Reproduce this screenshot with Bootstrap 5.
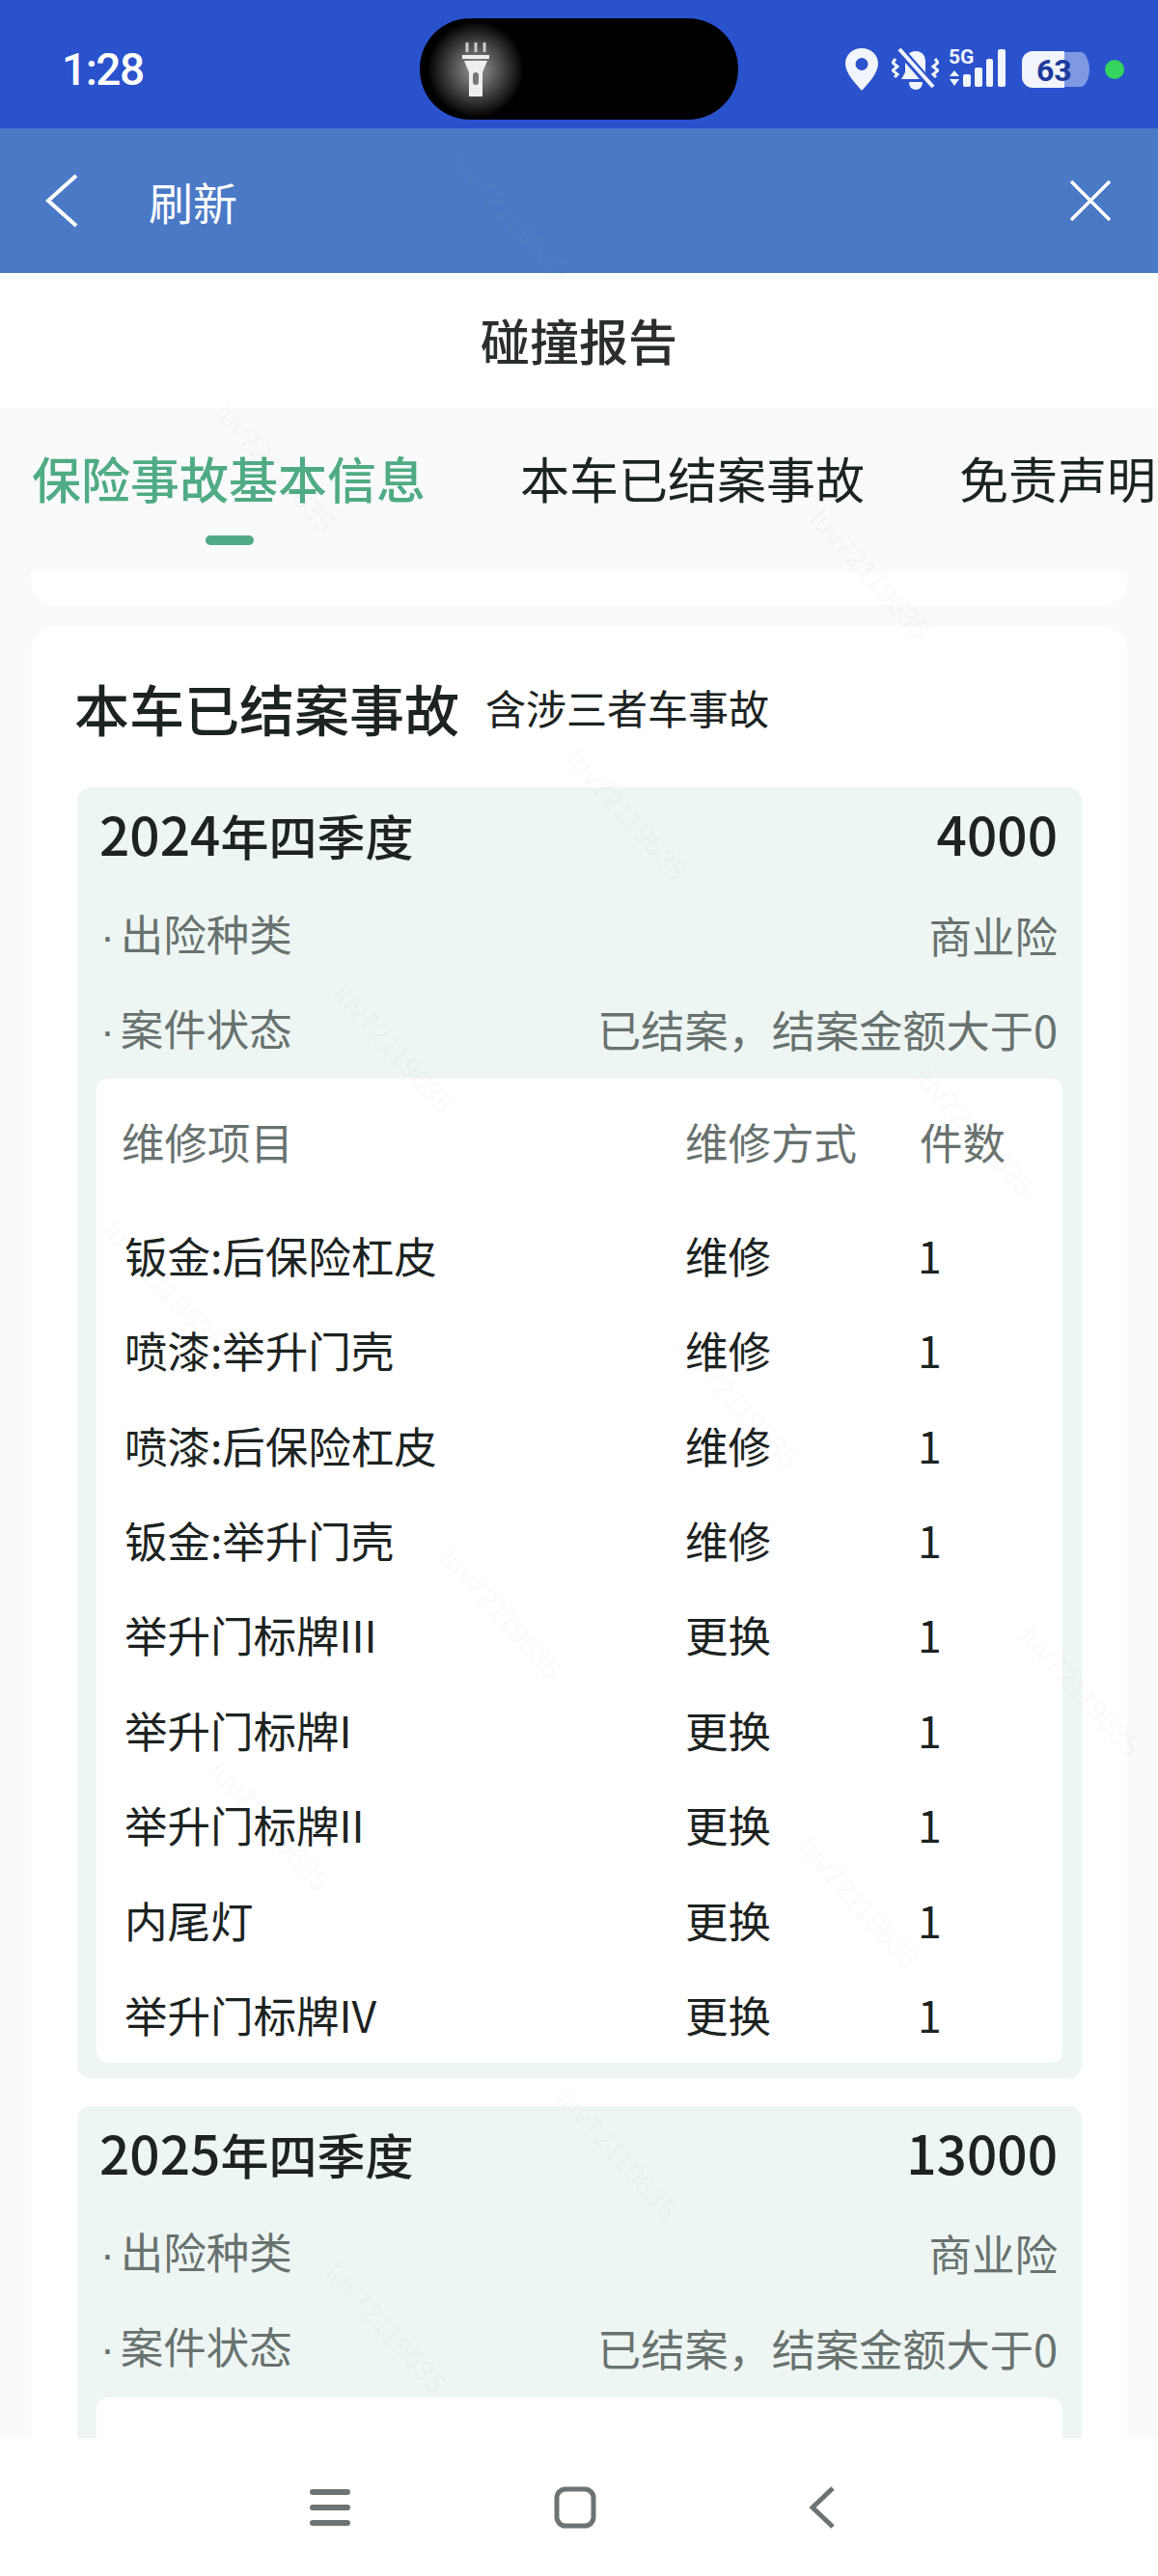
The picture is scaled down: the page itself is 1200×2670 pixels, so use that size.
<!DOCTYPE html>
<html lang="zh">
<head>
<meta charset="utf-8">
<title>碰撞报告</title>
<link href="https://cdn.jsdelivr.net/npm/bootstrap@5.3.5/dist/css/bootstrap.min.css" rel="stylesheet">
<style>
html, body { height: 2670px; }
body { font-family: "Noto Sans CJK SC", "Liberation Sans", sans-serif; background: #f9fafa; color: #1c2321; overflow: hidden; }
.phone { height: 2670px; width: 1200px; position: relative; overflow: hidden; }
.phone > * { flex: none; }
.status-bar { height: 133px; background: #2a52cc; color: #fff; padding: 11px 35px 0 64px; position: relative; }
.status-time { font-family: "Roboto", sans-serif; font-size: 46px; font-weight: 500; letter-spacing: -1.5px; }
.island { position: absolute; left: 435px; top: 19px; width: 330px; height: 105px; background: #000; border-radius: 52px; padding-left: 8px; }
.glow { width: 100px; height: 100px; background: radial-gradient(circle closest-side, #9a9a9a 0%, #555 45%, transparent 100%); }
.status-icons svg { display: block; }
.gap-a { margin-right: 14px; }
.gap-b { margin-right: 10px; }
.gap-c { margin-right: 15px; }
.dot-on { width: 20px; height: 20px; background: #35d45f; }
.nav-strip { height: 150px; background: #4a7ac6; color: #fff; padding: 0 49px 0 47px; }
.nav-label { font-size: 46px; margin-left: 73px; line-height: 1; }
.title-band { height: 140px; background: #fff; font-size: 51px; font-weight: 500; color: #2a2f2e; padding-bottom: 2px; }
.tab-strip { height: 170px; white-space: nowrap; overflow: hidden; padding-left: 33px; position: relative; }
.tab-item { font-size: 51px; line-height: 1; margin-right: 98px; padding-top: 47px; flex: none; }
.tab-item:last-of-type { margin-right: 0; }
.tab-on { color: #4fab85; font-weight: 500; }
.tab-bar { position: absolute; left: 213px; top: 132px; width: 50px; height: 10px; border-radius: 5px; background: #4fab85; }
.prev-end { height: 34px; margin: 0 32px 23px; background: #fff; border-radius: 0 0 24px 24px; }
.main-card { background: #fff; margin: 0 32px; padding: 0 47px 0 48px; border-radius: 24px; }
.main-head { height: 166px; margin-left: -3px; }
.main-head h2 { font-size: 57px; font-weight: 500; margin: 0; line-height: 1; }
.main-head span { font-size: 42px; margin-left: 27px; line-height: 1; }
.quarter { background: #eef6f4; border-radius: 14px; padding: 0 20px 16px; margin-bottom: 29px; }
.quarter-head { height: 104px; font-size: 50px; font-weight: 500; padding: 0 5px 9px 3px; }
.num-big { font-size: 55px; }
.quarter-row { height: 98px; font-size: 44.5px; color: #68726f; padding: 0 5px 0 4px; }
.row-dot { font-family: "Liberation Sans", sans-serif; margin-right: 6px; }
.state-text { font-size: 45.2px; }
.part-box { background: #fff; border-radius: 12px; margin-top: 2px; padding-left: 26px; }
.part-empty { height: 200px; }
.part-row { height: 98.4px; font-size: 44.5px; flex-wrap: nowrap; }
.part-head { color: #68726f; height: 134px; padding-bottom: 4px; }
.part-name { width: 584px; padding-left: 3px; flex: none; }
.part-head .part-name { padding-left: 0; }
.part-how { width: 243px; flex: none; }
.qty-val { margin-left: -2px; }
.bottom-bar { position: absolute; left: 0; right: 0; bottom: 0; height: 143px; background: #fff; gap: 211px; padding-right: 14px; z-index: 3; }
.back-icon { margin-left: 9px; }
.mark-layer { position: absolute; left: 0; right: 0; top: 133px; height: 2394px; overflow: hidden; pointer-events: none; z-index: 2; }
.mark-text { position: absolute; font-family: "Liberation Sans", sans-serif; font-size: 30px; color: rgba(150,160,165,.06); transform: translate(-50%, -50%) rotate(48deg); white-space: nowrap; }
</style>
</head>
<body>
<div class="phone d-flex flex-column">
  <div class="status-bar d-flex align-items-center">
    <div class="status-time">1:28</div>
    <div class="island d-flex align-items-center">
      <div class="glow d-flex align-items-center justify-content-center">
        <svg width="28" height="56" viewBox="0 0 28 56"><path d="M5 0v10M14 0v10M23 0v10" stroke="#ccc" stroke-width="3"/><path d="M0 13h28v4H0zM2 19h24l-5 12v25H7V31z" fill="#eee"/><rect x="11" y="31" width="6" height="13" rx="3" fill="#777"/></svg>
      </div>
    </div>
    <div class="status-icons ms-auto d-flex align-items-center">
      <svg class="gap-a" width="34" height="44" viewBox="0 0 34 44"><path fill-rule="evenodd" fill="#f2f5fc" d="M17 0C7 0 0 7 0 16c0 10 11 21 17 28 6-7 17-18 17-28C34 7 27 0 17 0zm0 10a6.500 6.500 0 1 1 0 13 6.500 6.500 0 0 1 0-13z"/></svg>
      <svg class="gap-b" width="49" height="44" viewBox="0 0 49 44"><path fill="#f2f5fc" d="M25 3c7 0 10 5 10 11v11l4 7H10l4-7V14c0-6 4-11 11-11zM18 35h14c0 5-3 8-7 8s-7-3-7-8z"/><path stroke="#2a52cc" stroke-width="9" d="M8 1l34 39"/><path stroke="#f2f5fc" stroke-width="4" d="M8 1l35 39"/><path fill="none" stroke="#f2f5fc" stroke-width="3" d="M4 11L1 15l5 4-5 4 5 4-3 3M45 11l3 4-5 4 5 4-5 4 3 3"/></svg>
      <svg class="gap-a mb-2" width="62" height="44" viewBox="0 -4 62 44"><text x="0" y="16" font-family="Roboto, sans-serif" font-size="21" font-weight="700" fill="#f2f5fc">5G</text><path fill="#f2f5fc" d="M6 23l5 6H1zM1 32h10l-5 7z"/><rect x="15" y="27" width="8" height="13" rx="2" fill="#f2f5fc"/><rect x="27" y="20" width="8" height="20" rx="2" fill="#f2f5fc"/><rect x="39" y="11" width="7" height="29" rx="2" fill="#f2f5fc"/><rect x="51" y="1" width="8" height="39" rx="2" fill="#f2f5fc"/></svg>
      <svg class="gap-c" width="71" height="38" viewBox="0 0 71 38"><path fill="#7f98e2" d="M44 1h17c5 0 9 10 9 18s-4 18-9 18H44z"/><path fill="#f2f5fc" d="M11 0h33v38H11C5 38 0 33 0 27V11C0 5 5 0 11 0z"/><text x="15" y="31" font-family="Roboto, sans-serif" font-size="32" font-weight="700" fill="#1d3a9c">63</text></svg>
      <div class="dot-on rounded-circle"></div>
    </div>
  </div>

  <div class="nav-strip d-flex align-items-center">
    <svg width="34" height="56" viewBox="0 0 34 56"><path fill="none" stroke="#fff" stroke-width="4" d="M32 2L3 28l29 26"/></svg>
    <div class="nav-label">刷新</div>
    <svg class="ms-auto" width="42" height="42" viewBox="0 0 42 42"><path stroke="#fff" stroke-width="3.500" d="M1 1l40 40M41 1L1 41"/></svg>
  </div>

  <div class="title-band d-flex align-items-center justify-content-center">碰撞报告</div>

  <div class="tab-strip d-flex">
    <div class="tab-item tab-on">保险事故基本信息</div>
    <div class="tab-item">本车已结案事故</div>
    <div class="tab-item">免责声明</div>
    <div class="tab-bar"></div>
  </div>
  <div class="prev-end"></div>

  <div class="main-card">
    <div class="main-head d-flex align-items-center">
      <h2>本车已结案事故</h2><span>含涉三者车事故</span>
    </div>

    <div class="quarter">
      <div class="quarter-head d-flex align-items-center justify-content-between"><span><span class="num-big">2024</span>年四季度</span><span class="num-big">4000</span></div>
      <div class="quarter-row d-flex align-items-center justify-content-between"><span><span class="row-dot">·</span>出险种类</span><span>商业险</span></div>
      <div class="quarter-row d-flex align-items-center justify-content-between"><span><span class="row-dot">·</span>案件状态</span><span class="state-text">已结案，结案金额大于0</span></div>
      <div class="part-box" id="parts"></div>
    </div>

    <div class="quarter">
      <div class="quarter-head d-flex align-items-center justify-content-between"><span><span class="num-big">2025</span>年四季度</span><span class="num-big">13000</span></div>
      <div class="quarter-row d-flex align-items-center justify-content-between"><span><span class="row-dot">·</span>出险种类</span><span>商业险</span></div>
      <div class="quarter-row d-flex align-items-center justify-content-between"><span><span class="row-dot">·</span>案件状态</span><span class="state-text">已结案，结案金额大于0</span></div>
      <div class="part-box part-empty"></div>
    </div>
  </div>

  <div class="mark-layer" id="marks"></div>

  <div class="bottom-bar d-flex align-items-center justify-content-center">
    <svg width="42" height="38" viewBox="0 0 42 38"><path stroke="#6d7374" stroke-width="6" stroke-linecap="round" d="M3 3h36M3 19h36M3 35h36"/></svg>
    <svg width="44" height="44" viewBox="0 0 44 44"><rect x="3" y="3" width="38" height="38" rx="9" fill="none" stroke="#6d7374" stroke-width="5"/></svg>
    <svg class="back-icon" width="27" height="44" viewBox="0 0 27 44"><path fill="none" stroke="#6d7374" stroke-width="5" d="M25 2L4 22l21 20"/></svg>
  </div>
</div>
<script>
  const parts = [
    ['钣金:后保险杠皮', '维修'], ['喷漆:举升门壳', '维修'], ['喷漆:后保险杠皮', '维修'],
    ['钣金:举升门壳', '维修'], ['举升门标牌III', '更换'], ['举升门标牌I', '更换'],
    ['举升门标牌II', '更换'], ['内尾灯', '更换'], ['举升门标牌IV', '更换']
  ];
  document.getElementById('parts').innerHTML =
    `<div class="part-row part-head d-flex align-items-center"><div class="part-name">维修项目</div><div class="part-how">维修方式</div><div>件数</div></div>` +
    parts.map(p => `<div class="part-row d-flex align-items-center"><div class="part-name">${p[0]}</div><div class="part-how">${p[1]}</div><div class="qty-val">1</div></div>`).join('');

  // faint diagonal watermark, centres read off the reference
  const marks = [[528,90],[285,352],[902,462],[650,712],[408,954],[1010,1040],[170,1200],[765,1322],[520,1540],[1120,1620],[280,1760],[890,1840],[640,2100],[400,2280]];
  document.getElementById('marks').innerHTML = marks.map(m =>
    `<div class="mark-text" style="left:${m[0]}px;top:${m[1]}px">luv72119635</div>`).join('');
</script>
<script src="https://cdn.jsdelivr.net/npm/bootstrap@5.3.5/dist/js/bootstrap.bundle.min.js"></script>
</body>
</html>
